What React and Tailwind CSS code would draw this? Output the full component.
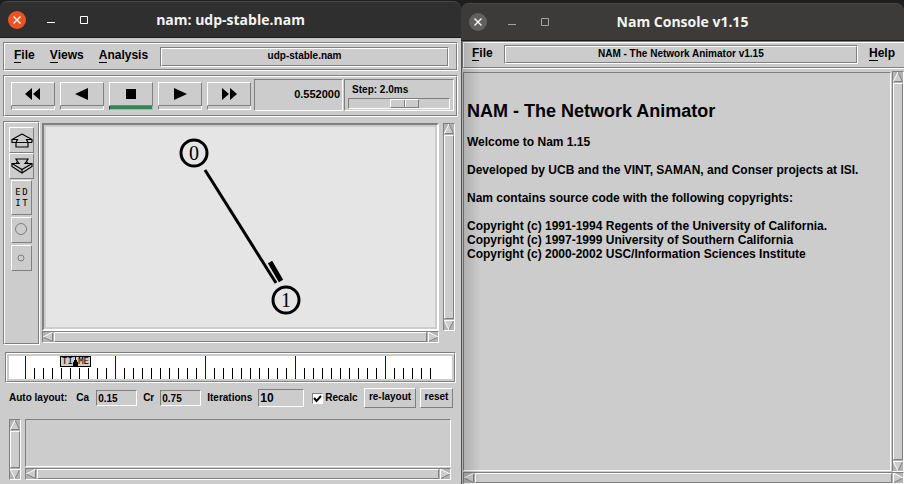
import React from "react";

const SUNKEN = "border border-t-[#7f7f7f] border-l-[#7f7f7f] border-b-white border-r-white";
const RAISED = "border border-t-white border-l-white border-b-[#7f7f7f] border-r-[#7f7f7f]";

function Ridge({ className = "", inner = "" , children }) {
  return (
    <div className={`flex ${SUNKEN} ${className}`}>
      <div className={`flex min-w-0 flex-1 ${RAISED} ${inner}`}>{children}</div>
    </div>
  );
}

function Arrow({ dir }) {
  const shapes = {
    up: { all: "5,0 10,10 0,10", light: "M5 0 0 10", dark: "M5 0 9.5 9.5H0" },
    down: { all: "0,0 10,0 5,10", light: "M0 .5H10M0 0 5 10", dark: "M10 0 5 10" },
    left: { all: "0,5 10,0 10,10", light: "M0 5 10 0", dark: "M0 5 9.5 9.5V0" },
    right: { all: "0,0 10,5 0,10", light: "M.5 10V0L10 5", dark: "M10 5 0 10" },
  };
  const s = shapes[dir];
  return (
    <svg width="10" height="10" viewBox="0 0 10 10" className="block shrink-0" aria-hidden="true">
      <polygon points={s.all} fill="#cccccc" />
      <path d={s.dark} stroke="#7f7f7f" fill="none" />
      <path d={s.light} stroke="#ffffff" fill="none" />
    </svg>
  );
}

function ScrollBar({ vertical = false, className = "" }) {
  return (
    <div
      className={`flex shrink-0 gap-px bg-[#b3b3b3] ${SUNKEN} ${vertical ? "w-3 flex-col" : "h-3"} ${className}`}
    >
      <Arrow dir={vertical ? "up" : "left"} />
      <div className={`flex-1 bg-[#cccccc] ${RAISED}`} />
      <Arrow dir={vertical ? "down" : "right"} />
    </div>
  );
}

function TitleBar({ title, active, className = "" }) {
  const ink = active ? "#ffffff" : "#a5a4a2";
  return (
    <header
      className={`grid grid-cols-[1fr_auto_1fr] items-center rounded-t-lg border-t border-b border-t-[#4a4949] border-b-[#1c1b1b] font-['Open_Sans','Noto_Sans',sans-serif] ${className}`}
    >
      <div className="flex items-center gap-5 pl-2">
        <button
          aria-label="Close"
          className={`flex size-[18px] items-center justify-center rounded-full ${active ? "bg-[#e95420]" : "bg-[#62615f]"}`}
        >
          <svg width="8" height="8" viewBox="0 0 8 8" aria-hidden="true">
            <path d="M.5.5 7.5 7.5M7.5.5.5 7.5" stroke="#fff" strokeWidth="1.3" />
          </svg>
        </button>
        <button aria-label="Minimize" className="flex h-4 w-[10px] items-center justify-center">
          <svg width="8" height="8" viewBox="0 0 8 8" aria-hidden="true">
            <path d="M0 6.5H8" stroke={ink} />
          </svg>
        </button>
        <button aria-label="Maximize" className="flex size-4 items-center justify-center">
          <svg width="8" height="8" viewBox="0 0 8 8" aria-hidden="true">
            <path d="M.5.5h7v7h-7z" fill="none" stroke={ink} />
          </svg>
        </button>
      </div>
      <h1 className="text-sm leading-5 font-bold text-[#f4f4f2]">{title}</h1>
    </header>
  );
}

function MenuItem({ label }) {
  return (
    <button className="pb-1 text-[12px] leading-4 font-bold">
      <span className="inline-block border-b border-black leading-[13px]">{label[0]}</span>
      {label.slice(1)}
    </button>
  );
}

function PlayButton({ label, active = false, children }) {
  return (
    <button aria-label={label} className="flex w-11 flex-col">
      <span className={`flex h-6 w-full items-center justify-center ${RAISED}`}>
        <svg width="32" height="12" viewBox="0 0 32 12" aria-hidden="true">
          {children}
        </svg>
      </span>
      <span
        className={`h-1 w-full border-r border-b border-l ${
          active
            ? "border-l-[#17462c] border-r-[#8fc5a6] border-b-[#8fc5a6] bg-[#2e8b57]"
            : "border-l-[#7f7f7f] border-r-white border-b-white"
        }`}
      />
    </button>
  );
}

function Toolbar() {
  return (
    <Ridge className="mx-[3px] mt-1 h-[42px]" inner="justify-between gap-[3px] pr-[2px] pl-[5px]">
      <div className="flex gap-[5px] pt-[5px] pl-px">
        <PlayButton label="Rewind">
          <path d="M15 0V12L8 6ZM23 0V12L16 6Z" />
        </PlayButton>
        <PlayButton label="Play backward">
          <path d="M22 0V12L9 6Z" />
        </PlayButton>
        <PlayButton label="Stop" active>
          <path d="M11 1h10v10H11z" />
        </PlayButton>
        <PlayButton label="Play forward">
          <path d="M10 0V12L23 6Z" />
        </PlayButton>
        <PlayButton label="Fast forward">
          <path d="M9 0V12L16 6ZM17 0V12L24 6Z" />
        </PlayButton>
      </div>
      <div className="flex min-w-0 flex-1 gap-px pt-[2px] pb-1">
        <output className={`flex flex-[91] items-center justify-end pr-[2px] pb-[2px] text-[11px] leading-4 font-bold ${SUNKEN}`}>
          0.552000
        </output>
        <div className={`flex flex-[109] flex-col px-[3px] pt-[3px] ${SUNKEN}`}>
          <label htmlFor="step" className="pl-1 text-[10px] leading-[14px] font-bold">
            Step: 2.0ms
          </label>
          <input
            id="step"
            type="range"
            defaultValue="57"
            className={`mt-px block h-[11px] w-full appearance-none bg-[#cccccc] ${SUNKEN} [&::-webkit-slider-thumb]:h-[9px] [&::-webkit-slider-thumb]:w-[29px] [&::-webkit-slider-thumb]:appearance-none [&::-webkit-slider-thumb]:border [&::-webkit-slider-thumb]:border-t-white [&::-webkit-slider-thumb]:border-r-[#7f7f7f] [&::-webkit-slider-thumb]:border-b-[#7f7f7f] [&::-webkit-slider-thumb]:border-l-white [&::-webkit-slider-thumb]:bg-[linear-gradient(90deg,#ccc_13px,#7f7f7f_13px,#7f7f7f_14px,#fff_14px,#fff_15px,#ccc_15px)]`}
          />
        </div>
      </div>
    </Ridge>
  );
}

function ToolPalette() {
  return (
    <Ridge className="w-[37px] shrink-0" inner="flex-col items-center pt-1">
      <button aria-label="Zoom in" className={`flex h-[26px] w-[25px] items-center justify-center ${RAISED}`}>
        <svg width="22" height="15" viewBox="0 0 22 15" fill="none" stroke="#000" strokeWidth="1.2" aria-hidden="true">
          <path d="M11 1 1 6.5V9.5H4.5M21 9.5V6.5L11 1M1 6.5H6.5L5 9.5V14H17V9.5L15.5 6.5H21M21 9.5H17M5 9.5H17" />
        </svg>
      </button>
      <button aria-label="Zoom out" className={`flex h-[26px] w-[25px] items-center justify-center ${RAISED}`}>
        <svg width="22" height="16" viewBox="0 0 22 16" fill="none" stroke="#000" strokeWidth="1.2" aria-hidden="true">
          <path d="M5 1H17L15.5 3.5 17 5.5H21V8.5L11 15 1 8.5V5.5H5L6.5 3.5Z" />
          <path d="M1 5.5 11 11.5 21 5.5M11 11.5V15M6.5 3.5 8 5.5H5M15.5 3.5 14 5.5H17" />
        </svg>
      </button>
      <button
        className={`mt-px grid h-[35px] w-[21px] grid-cols-[7px_7px] content-center justify-center justify-items-center font-['DejaVu_Sans_Mono',monospace] text-[9px] leading-[11px] ${RAISED}`}
      >
        <span>E</span>
        <span>D</span>
        <span>I</span>
        <span>T</span>
      </button>
      <button aria-label="Larger nodes" className={`mt-[2px] flex h-[26px] w-[21px] items-center justify-center pr-[2px] pb-[3px] ${RAISED}`}>
        <svg width="12" height="12" viewBox="0 0 12 12" fill="none" stroke="#7f7f7f" aria-hidden="true">
          <circle cx="6" cy="6" r="5.5" />
        </svg>
      </button>
      <button aria-label="Smaller nodes" className={`mt-[2px] flex h-[26px] w-[21px] items-center justify-center pr-px pb-px ${RAISED}`}>
        <svg width="12" height="12" viewBox="0 0 12 12" fill="none" stroke="#7f7f7f" aria-hidden="true">
          <circle cx="6" cy="6" r="3" />
        </svg>
      </button>
    </Ridge>
  );
}

function Topology() {
  return (
    <div className="min-h-0 flex-1 border-2 border-t-[#7f7f7f] border-r-white border-b-white border-l-[#7f7f7f] p-[2px]">
      <svg className="block h-full w-full bg-[#e5e5e5]" role="img" aria-label="Network topology">
        <g stroke="#000" fill="none">
          <path d="M159 43 230 156" strokeWidth="3" />
          <path d="M224 135 235 154" strokeWidth="5" />
          <circle cx="148" cy="26" r="13" strokeWidth="3" />
          <circle cx="240" cy="173" r="13" strokeWidth="3" />
        </g>
        <g className="font-['Liberation_Serif',serif] text-[20px]" textAnchor="middle">
          <text x="148" y="33">0</text>
          <text x="240" y="180">1</text>
        </g>
      </svg>
    </div>
  );
}

function Timeline() {
  const ticks = Array.from({ length: 46 }, (_, i) => i);
  return (
    <Ridge className="mx-[5px] mt-[7px] h-[31px]" inner="p-px">
      <div className="relative flex-1 border border-[#cccccc] bg-white">
        <svg className="block h-full w-full" aria-hidden="true">
          {ticks.map((i) => (
            <rect
              key={i}
              x={16 + 9 * i}
              y={i % 10 ? 12 : 0}
              width="1"
              height={i % 10 ? 13 : 25}
              fill={i % 10 ? "#000" : "#0000cc"}
            />
          ))}
        </svg>
        <div className="absolute top-0 left-[51px] flex h-[11px] w-[31px] items-center justify-between border border-black bg-[#cccccc] px-px font-['DejaVu_Sans_Mono',monospace] text-[9px] leading-[9px]">
          <span>TI</span>
          <svg width="5" height="9" viewBox="0 0 5 9" className="shrink-0" aria-hidden="true">
            <path d="M2 0h1v3h1v2h1v4H0V5h1V3h1z" />
          </svg>
          <span>ME</span>
        </div>
      </div>
    </Ridge>
  );
}

function LayoutControls() {
  return (
    <form className="mx-2 mt-[5px] flex h-[21px] items-center pb-px text-[10px] leading-[14px] font-bold" onSubmit={(e) => e.preventDefault()}>
      <span className="pl-px">Auto layout:</span>
      <label htmlFor="ca" className="pl-[9px]">Ca</label>
      <input id="ca" defaultValue="0.15" className={`ml-[7px] h-4 w-[41px] px-px ${SUNKEN}`} />
      <label htmlFor="cr" className="pl-[6px]">Cr</label>
      <input id="cr" defaultValue="0.75" className={`ml-[6px] h-4 w-[41px] px-px ${SUNKEN}`} />
      <label htmlFor="iterations" className="pl-[6px]">Iterations</label>
      <input id="iterations" defaultValue="10" className={`ml-[6px] h-[18px] w-[46px] px-px text-[12px] ${SUNKEN}`} />
      <label className="ml-2 flex items-center gap-[2px]">
        <span className="grid">
          <input
            type="checkbox"
            defaultChecked
            className={`peer col-start-1 row-start-1 size-[11px] appearance-none bg-white ${SUNKEN}`}
          />
          <svg
            viewBox="0 0 11 11"
            className="pointer-events-none invisible col-start-1 row-start-1 size-[11px] peer-checked:visible"
            aria-hidden="true"
          >
            <path d="M2 5 4.5 8 9 3" fill="none" stroke="#000" strokeWidth="2" />
          </svg>
        </span>
        Recalc
      </label>
      <div className="ml-auto flex gap-1">
        <button className={`h-5 w-[52px] pb-[2px] ${RAISED}`}>re-layout</button>
        <button className={`h-5 w-[33px] pb-[2px] ${RAISED}`}>reset</button>
      </div>
    </form>
  );
}

function AnimatorWindow() {
  return (
    <section className="flex min-h-screen min-w-0 flex-col bg-[#cccccc]">
      <div className="bg-[#1f1e1e] pt-px">
        <TitleBar title="nam: udp-stable.nam" active className="h-[37px] bg-[#302f2f]" />
      </div>
      <Ridge className="mx-[3px] mt-1 h-[29px]" inner="items-center pr-[7px] pl-[9px]">
        <nav className="flex gap-[15px]">
          <MenuItem label="File" />
          <MenuItem label="Views" />
          <MenuItem label="Analysis" />
        </nav>
        <Ridge className="ml-3 h-5 flex-1" inner="items-center justify-center pb-px">
          <span className="text-[10px] leading-[14px] font-bold">udp-stable.nam</span>
        </Ridge>
      </Ridge>
      <Toolbar />
      <div className="mx-[3px] mt-1 flex flex-1">
        <ToolPalette />
        <div className="ml-[2px] flex min-w-0 flex-1 flex-col pt-[2px] pb-[2px]">
          <Topology />
          <ScrollBar />
        </div>
        <ScrollBar vertical className="mt-[2px] mr-[3px] mb-[14px] ml-1" />
      </div>
      <Timeline />
      <LayoutControls />
      <div className="mt-[10px] mr-[10px] mb-1 ml-[9px] flex gap-1">
        <ScrollBar vertical />
        <div className="flex min-w-0 flex-1 flex-col gap-px">
          <div className={`h-12 ${SUNKEN}`} />
          <ScrollBar />
        </div>
      </div>
    </section>
  );
}

function ConsoleWindow() {
  return (
    <section className="relative flex min-h-screen min-w-0 flex-col overflow-hidden bg-[#cccccc]">
      <div className="bg-[#1f1e1e] pt-[3px]">
        <TitleBar title="Nam Console v1.15" className="h-[38px] bg-[#3c3b39]" />
      </div>
      <Ridge className="-mr-[2px] ml-px h-[28px]" inner="items-center justify-between pr-[9px] pl-2">
        <MenuItem label="File" />
        <Ridge className="mr-[11px] mb-px ml-[11px] h-[19px] flex-1" inner="items-center justify-center pb-px">
          <span className="text-[10px] leading-[14px] font-bold">NAM - The Network Animator v1.15</span>
        </Ridge>
        <MenuItem label="Help" />
      </Ridge>
      <div className="mt-[2px] ml-[2px] flex flex-1 gap-px">
        <article className={`mt-px mb-px min-w-0 flex-1 px-[3px] text-[12px] leading-[14px] font-bold ${SUNKEN}`}>
          <h2 className="mt-7 text-[18px] leading-5">NAM - The Network Animator</h2>
          <p className="mt-[14px]">Welcome to Nam 1.15</p>
          <p className="mt-[14px]">Developed by UCB and the VINT, SAMAN, and Conser projects at ISI.</p>
          <p className="mt-[14px]">Nam contains source code with the following copyrights:</p>
          <p className="mt-[14px]">
            Copyright (c) 1991-1994 Regents of the University of California.
            <br />
            Copyright (c) 1997-1999 University of Southern California
            <br />
            Copyright (c) 2000-2002 USC/Information Sciences Institute
          </p>
        </article>
        <ScrollBar vertical />
      </div>
      <ScrollBar className="ml-[2px]" />
      <div className="pointer-events-none absolute top-[41px] bottom-0 left-0 w-5 border-l border-[#555555] bg-gradient-to-r from-black/15 to-transparent" />
    </section>
  );
}

export default function App() {
  return (
    <main className="grid min-h-screen grid-cols-[461fr_443fr] bg-[#1f1e1e] font-['Liberation_Sans',Arial,sans-serif] text-black">
      <AnimatorWindow />
      <ConsoleWindow />
    </main>
  );
}
